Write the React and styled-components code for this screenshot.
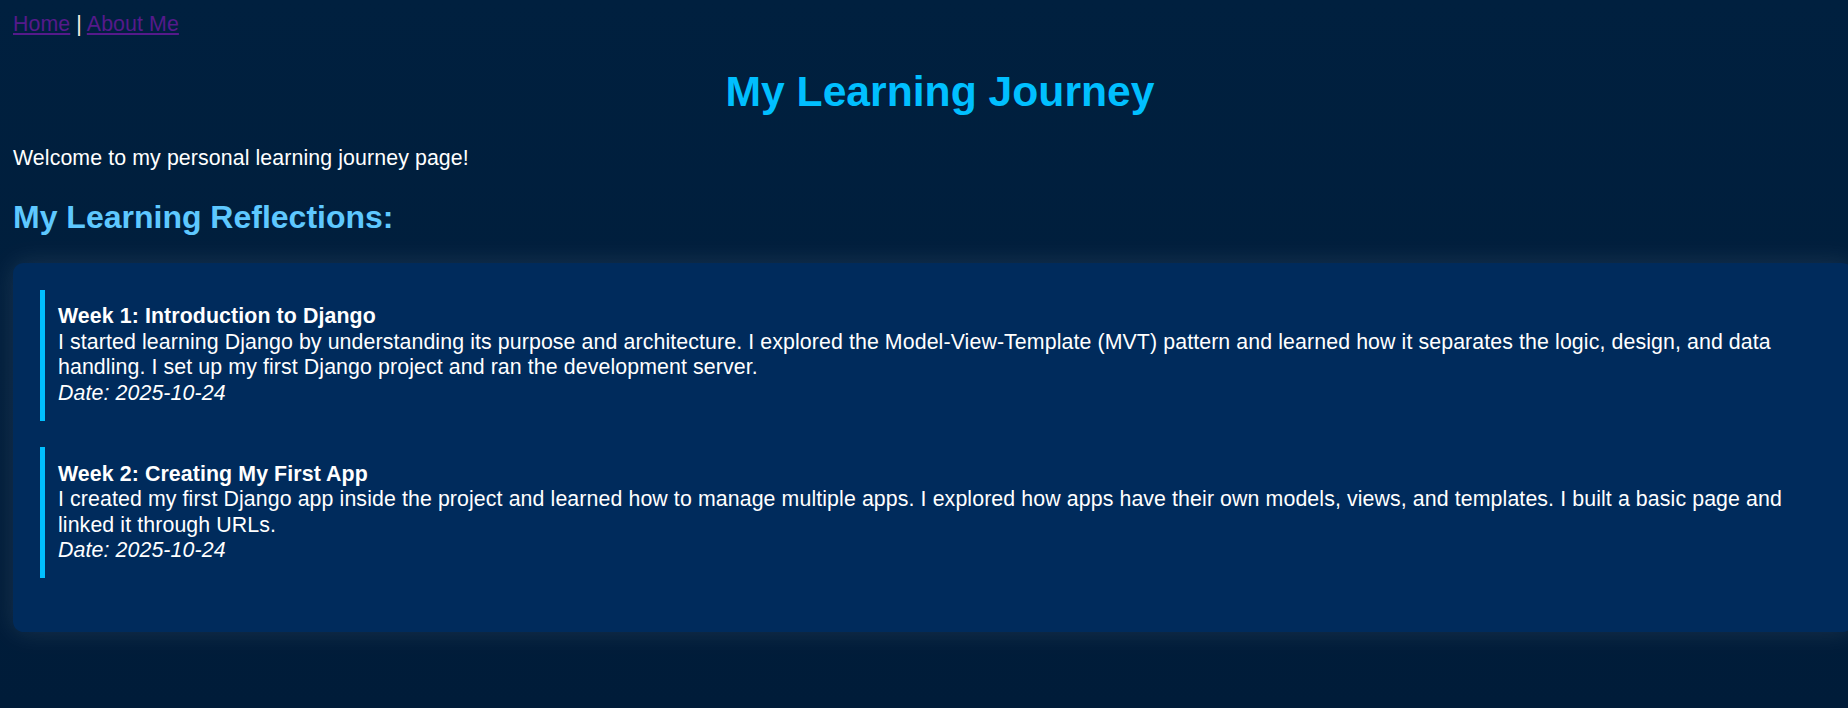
import React from "react";
import styled, { createGlobalStyle } from "styled-components";

const GlobalStyle = createGlobalStyle`
  html, body {
    margin: 0;
    padding: 0;
  }
  body {
    min-height: 100vh;
    background: linear-gradient(to bottom, #00203f 0%, #001c39 100%);
    color: #ffffff;
    font-family: "Liberation Sans", Arial, sans-serif;
    font-size: 21.333px;
    line-height: 1.2;
    letter-spacing: 0.1px;
    overflow: hidden;
  }
`;

const Page = styled.div`
  padding: 12px 13px;
  min-height: 100vh;
  box-sizing: border-box;
`;

const Nav = styled.nav`
  color: #f5f0e6;
`;

const NavLink = styled.a`
  color: #551a8b;
  text-decoration: underline;
`;

const Title = styled.h1`
  margin: 28.6px 0;
  padding-left: 32px;
  font-size: 42.667px;
  font-weight: bold;
  letter-spacing: 0;
  text-align: center;
  color: #00bfff;
`;

const Intro = styled.p`
  margin: 21.333px 0;
`;

const Subtitle = styled.h2`
  margin: 26.56px 0;
  font-size: 32px;
  font-weight: bold;
  letter-spacing: 0;
  color: #5ec8ff;
`;

const Card = styled.ul`
  list-style: none;
  box-sizing: border-box;
  width: calc(100% + 18px);
  margin: 0;
  padding: 26.667px;
  background: #002b5c;
  border-radius: 10.667px;
  box-shadow: 0 0 26px rgba(255, 255, 255, 0.1);
`;

const Entry = styled.li`
  border-left: 5.333px solid #00bfff;
  padding: 14.3px 13.333px;
  margin-bottom: 26.667px;
`;

const EntryTitle = styled.strong`
  font-weight: bold;
`;

const EntryDate = styled.em`
  font-style: italic;
`;

const entries = [
  {
    title: "Week 1: Introduction to Django",
    text: "I started learning Django by understanding its purpose and architecture. I explored the Model-View-Template (MVT) pattern and learned how it separates the logic, design, and data handling. I set up my first Django project and ran the development server.",
    date: "2025-10-24",
  },
  {
    title: "Week 2: Creating My First App",
    text: "I created my first Django app inside the project and learned how to manage multiple apps. I explored how apps have their own models, views, and templates. I built a basic page and linked it through URLs.",
    date: "2025-10-24",
  },
];

export default function App() {
  return (
    <>
      <GlobalStyle />
      <Page>
        <Nav>
          <NavLink href="#">Home</NavLink> | <NavLink href="#">About Me</NavLink>
        </Nav>
        <Title>My Learning Journey</Title>
        <Intro>Welcome to my personal learning journey page!</Intro>
        <Subtitle>My Learning Reflections:</Subtitle>
        <Card>
          {entries.map((e) => (
            <Entry key={e.title}>
              <EntryTitle>{e.title}</EntryTitle>
              <br />
              {e.text}
              <br />
              <EntryDate>Date: {e.date}</EntryDate>
            </Entry>
          ))}
        </Card>
      </Page>
    </>
  );
}
